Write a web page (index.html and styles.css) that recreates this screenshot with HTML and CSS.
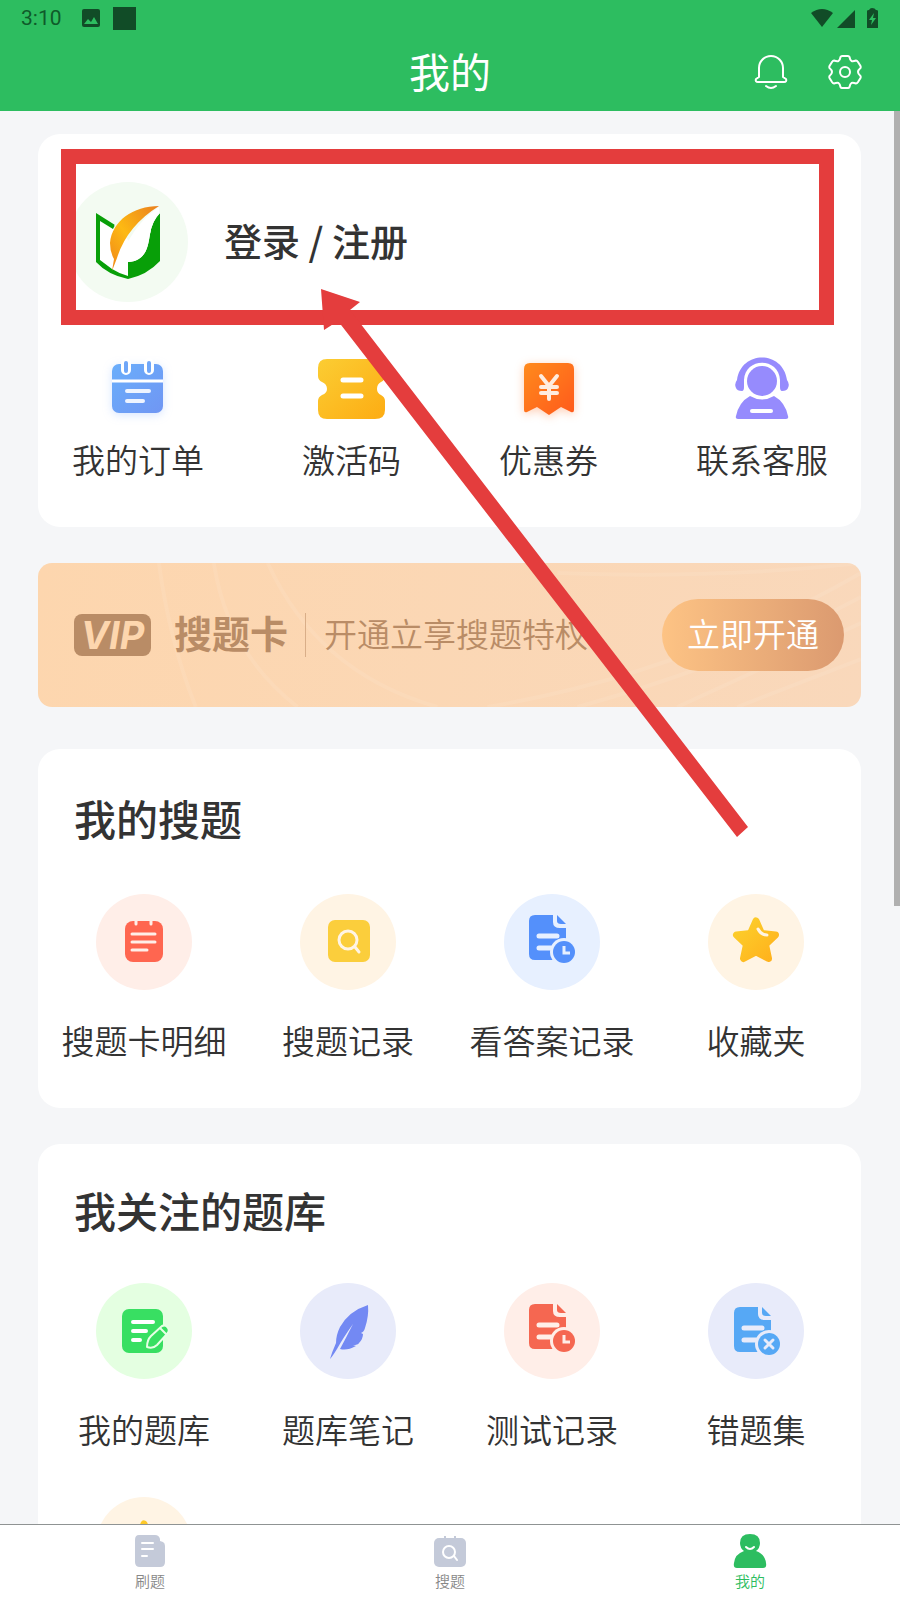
FILE: index.html
```html
<!DOCTYPE html>
<html lang="zh-CN">
<head>
<meta charset="utf-8">
<meta name="viewport" content="width=device-width, initial-scale=1">
<title>我的</title>
<link rel="stylesheet" href="styles.css">
</head>
<body>
<svg class="defs" width="0" height="0" aria-hidden="true">
  <defs>
    <linearGradient id="blue" x1="0" y1="0" x2="1" y2="1"><stop offset="0" stop-color="#6aaefb"/><stop offset="1" stop-color="#7096f3"/></linearGradient>
    <linearGradient id="gold" x1="0" y1="0" x2="1" y2="1"><stop offset="0" stop-color="#fbcd33"/><stop offset="1" stop-color="#fdac13"/></linearGradient>
    <linearGradient id="orange" x1="0" y1="0" x2="1" y2="1"><stop offset="0" stop-color="#ff8a1c"/><stop offset="1" stop-color="#ff5a1c"/></linearGradient>
    <linearGradient id="star" x1="0" y1="0" x2="1" y2="1"><stop offset="0" stop-color="#fcd02c"/><stop offset="1" stop-color="#ffb11c"/></linearGradient>
    <linearGradient id="plume" x1="0" y1="1" x2="1" y2="0"><stop offset="0" stop-color="#f08519"/><stop offset=".45" stop-color="#fdb913"/><stop offset="1" stop-color="#ea7f1e"/></linearGradient>
    <symbol id="doc" viewBox="0 0 96 96">
      <path fill="currentColor" d="M31 21H49V28Q49 34 56 34H62V66H31Q25 66 25 60V27Q25 21 31 21Z"/>
      <path fill="currentColor" d="M53 21L62 30H57Q53 30 53 27Z"/>
      <path class="cut" d="M35 42H53M35 54H47" stroke-width="5" stroke-linecap="round"/>
      <circle class="disc" cx="60" cy="58" r="14"/>
      <circle fill="currentColor" cx="60" cy="58" r="11"/>
    </symbol>
    <symbol id="favorite" viewBox="0 0 96 96">
      <path fill="url(#star)" stroke="url(#star)" stroke-width="7" stroke-linejoin="round" d="M48 27L53.500 39.500L67.500 41L57.500 50.500L60.500 64.500L48 58L35.500 64.500L38.500 50.500L28.500 41L42.500 39.500Z"/>
      <path fill="none" stroke="#fff4e4" stroke-width="3" stroke-linecap="round" d="M50 35Q53 41 59 41"/>
    </symbol>
  </defs>
</svg>
<div class="app">
  <header class="header">
    <div class="status">
      <div class="status-group">
        <span class="time">3:10</span>
        <svg class="status-photo" width="18" height="18" viewBox="0 0 18 18"><rect width="18" height="18" rx="2" fill="#114c27"/><path d="M2 15L6 10L9 13L12 8L16 15Z" fill="#2dbd60"/></svg>
        <span class="status-square"></span>
      </div>
      <svg class="status-system" width="68" height="20" viewBox="0 0 68 20" fill="#114c27"><path d="M0 5Q11-3 22 5L11 19Z"/><path d="M26 20L44 2V20Z"/><path d="M56 3Q56 2 58 2Q59 0 61 0Q64 0 65 2Q67 2 67 3V20H56Z"/><path d="M63 5L58 12H61L60 17L65 10H62Z" fill="#2dbd60"/></svg>
    </div>
    <div class="titlebar">
      <h1 class="title">我的</h1>
      <div class="actions">
        <button class="icon-button" aria-label="消息"><svg width="36" height="36" viewBox="0 0 36 36" fill="none" stroke="#fff" stroke-width="2" stroke-linecap="round" stroke-linejoin="round"><path d="M6 23V14A12 12 0 0 1 30 14V23L33 25Q34 28 31 28H5Q2 28 3 25Z"/><path d="M13 32Q18 36 23 32"/></svg></button>
        <button class="icon-button" aria-label="设置"><svg width="36" height="36" viewBox="0 0 36 36" fill="none" stroke="#fff" stroke-width="2" stroke-linejoin="round"><path d="M15 2H21Q22 2 22.500 3Q23 6 24.500 7Q26 7.500 29 6.500Q30 6.500 31 8L33.500 12Q34 13 33.500 14Q31 16 31 18Q31 20 33.500 22Q34 23 33.500 24L31 28Q30 29.500 29 29.500Q26 28.500 24.500 29Q23 30 22.500 33Q22 34 21 34H15Q14 34 13.500 33Q13 30 11.500 29Q10 28.500 7 29.500Q6 29.500 5 28L2.500 24Q2 23 2.500 22Q5 20 5 18Q5 16 2.500 14Q2 13 2.500 12L5 8Q6 6.500 7 6.500Q10 7.500 11.500 7Q13 6 13.500 3Q14 2 15 2Z"/><circle cx="18" cy="18" r="5"/></svg></button>
      </div>
    </div>
  </header>

  <main class="content">
    <section class="card account">
      <a class="login" href="#">
        <svg class="avatar" width="120" height="120" viewBox="0 0 120 120">
          <circle cx="60" cy="60" r="60" fill="#f3fbf2"/>
          <path fill="#fff" d="M30 36L48 47L90 28L90 78Q78 88 60 94Q42 89 30 79Z"/>
          <path fill="#089f08" d="M28 31L47 43L45 47L32 39V78L44 87Q52 92 60 94V80C78 79 80 65 82 52Q84 39 92 31V79Q79 93 60 97Q40 93 28 80Z"/>
          <path fill="#f3fbf2" d="M46 43L91 24L92 31Q84 39 82 52L62 60Z"/>
          <path fill="#fff" d="M91 25Q68 40 55 70L47 87L60 92V80C78 79 80 65 82 52Q84 39 91 31Z"/>
          <path fill="url(#plume)" d="M91 24C65 24 44 39 42 61Q42 70 46 77L44 89L49 76Q59 44 91 24Z"/>
        </svg>
        <span class="login-text">登录 / 注册</span>
      </a>
      <nav class="shortcuts">
        <a class="shortcut" href="#">
          <svg width="76" height="76" viewBox="0 0 76 76"><g class="blue-glow"><rect x="12" y="14" width="51" height="49" rx="7" fill="url(#blue)"/></g><path stroke="#fff" stroke-width="3" d="M12 31H63"/><path stroke="#fff" stroke-width="10" stroke-linecap="round" d="M26 13V20M49 13V20"/><path stroke="#6fa6f8" stroke-width="4" stroke-linecap="round" d="M26 13V21M49 13V21"/><path stroke="#eef4ff" stroke-width="4" stroke-linecap="round" d="M27 41H49M27 51H43"/></svg>
          <span>我的订单</span>
        </a>
        <a class="shortcut" href="#">
          <svg width="76" height="76" viewBox="0 0 76 76"><path fill="url(#gold)" d="M13 9H61Q71 9 71 18V26Q71 30 67 32Q63 34 63 39Q63 43 67 45Q71 47 71 51V60Q71 69 61 69H13Q4 69 4 60V51Q4 47 8 45Q13 43 13 39Q13 34 8 32Q4 30 4 26V18Q4 9 13 9Z"/><path stroke="#fff" stroke-width="5" stroke-linecap="round" d="M29 30H47M29 46H47"/></svg>
          <span>激活码</span>
        </a>
        <a class="shortcut" href="#">
          <svg width="76" height="76" viewBox="0 0 76 76"><path class="orange-glow" fill="url(#orange)" d="M19 13H57Q63 13 63 19V60Q63 63 60 62L50 57L38 65L26 57L16 62Q13 63 13 60V19Q13 13 19 13Z"/><path fill="none" stroke="#ffecdf" stroke-width="4" stroke-linecap="round" d="M30 26L38 36L46 26M38 36V49M30 37H46M30 43H46"/></svg>
          <span>优惠券</span>
        </a>
        <a class="shortcut" href="#">
          <svg width="76" height="76" viewBox="0 0 76 76" fill="#968bfd"><circle cx="38" cy="31" r="15"/><path d="M13 30C17 0 59 0 63 30Q66 34 64 38Q63 41 58 41Q56 41 56 37V30C55 7 21 7 20 30V37Q20 41 18 41Q13 41 12 38Q10 34 13 30Z"/><path d="M26 46Q38 53 50 46Q61 52 64 66Q65 69 62 69H14Q11 69 12 66Q15 52 26 46Z"/><path stroke="#fff" stroke-width="4" stroke-linecap="round" d="M28 61H47"/></svg>
          <span>联系客服</span>
        </a>
      </nav>
      <div class="highlight"></div>
    </section>

    <section class="vip">
      <svg class="vip-rays" viewBox="0 0 824 144" preserveAspectRatio="none" fill="none" stroke="#fff" stroke-opacity=".08" stroke-width="4"><path d="M121 0Q132 80 158 144M176 0Q190 90 260 144M230 0Q280 110 400 144M450 144Q650 110 824 10M540 144Q700 100 824 34M640 144L824 60M520 10Q680 16 824 0M700 144L824 96"/></svg>
      <span class="vip-badge">VIP</span>
      <strong class="vip-name">搜题卡</strong>
      <span class="vip-desc">开通立享搜题特权</span>
      <button class="vip-button">立即开通</button>
    </section>

    <section class="card search-card">
      <h2 class="card-title">我的搜题</h2>
      <div class="grid">
        <a class="entry" href="#"><svg class="bubble rose" viewBox="0 0 96 96"><rect x="29" y="27" width="38" height="41" rx="8" fill="#ff6650"/><path class="cut" stroke-width="3" stroke-linecap="round" d="M40 26V30M55 26V30"/><path class="cut" stroke-width="3" stroke-linecap="round" d="M36 40H59M36 48H59M36 56H51"/></svg><span>搜题卡明细</span></a>
        <a class="entry" href="#"><svg class="bubble cream" viewBox="0 0 96 96"><rect x="28" y="26" width="42" height="42" rx="7" fill="#fbce3c"/><circle class="cut" stroke-width="3" cx="48" cy="46" r="9"/><path class="cut" stroke-width="3" stroke-linecap="round" d="M55 53L59 58"/></svg><span>搜题记录</span></a>
        <a class="entry" href="#"><svg class="bubble sky" viewBox="0 0 96 96"><use href="#doc"/><path class="cut" stroke-width="3" d="M60 52V59H66"/></svg><span>看答案记录</span></a>
        <a class="entry" href="#"><svg class="bubble cream" viewBox="0 0 96 96"><use href="#favorite"/></svg><span>收藏夹</span></a>
      </div>
    </section>

    <section class="card bank-card">
      <h2 class="card-title">我关注的题库</h2>
      <div class="grid">
        <a class="entry" href="#"><svg class="bubble mint" viewBox="0 0 96 96"><rect x="26" y="26" width="41" height="44" rx="7" fill="#38df62"/><path stroke="#fff" stroke-width="4" stroke-linecap="round" d="M37 39H57M37 48H50M37 57H44"/><path fill="#38df62" stroke="#e7ffe5" stroke-width="2" stroke-linejoin="round" d="M51 64Q51 57 55 53L66 43Q70 41 72 45Q74 48 71 51L61 62Q57 66 51 64ZM64 45L70 51"/></svg><span>我的题库</span></a>
        <a class="entry" href="#"><svg class="bubble lilac" viewBox="0 0 96 96"><path fill="#7389f3" d="M68 22Q49 28 40 44Q36 52 36 60Q32 69 30 76Q32 74 37 66Q43 55 53 41Q46 55 40 66Q47 68 56 63L53 62Q58 62 59 60Q63 56 63 51L61 50Q64 49 65 45Q69 33 68 22Z"/></svg><span>题库笔记</span></a>
        <a class="entry" href="#"><svg class="bubble rose" viewBox="0 0 96 96"><use href="#doc"/><path class="cut" stroke-width="3" d="M60 52V59H66"/></svg><span>测试记录</span></a>
        <a class="entry" href="#"><svg class="bubble lilac" viewBox="-1 -3 96 96"><use href="#doc" width="96" height="96"/><path class="cut" stroke-width="3" stroke-linecap="round" d="M56 54L64 62M64 54L56 62"/></svg><span>错题集</span></a>
        <a class="entry" href="#" aria-label="收藏"><svg class="bubble cream" viewBox="0 0 96 96"><use href="#favorite"/></svg></a>
      </div>
    </section>

    <svg class="arrow" width="900" height="760" viewBox="0 111 900 760" aria-hidden="true"><path fill="#e43d3d" d="M321 289L360 302L350 310L748 827L737 837L338 321L324 330Z"/></svg>
    <div class="scroll-thumb"></div>
  </main>

  <nav class="tabs">
    <a class="tab" href="#"><svg width="34" height="34" viewBox="0 0 34 34"><path fill="#c4cad9" d="M6 1H22Q26 1 27 5V7L30 8Q32 9 32 12V28Q32 33 27 33H7Q2 33 2 28V6Q2 1 6 1Z"/><path stroke="#fff" stroke-width="2" stroke-linecap="round" d="M9 9H20M9 15H20M9 22H14"/></svg><span>刷题</span></a>
    <a class="tab" href="#"><svg width="34" height="34" viewBox="0 0 34 34" fill="none"><rect x="1" y="4" width="32" height="29" rx="5" fill="#c4cad9"/><path stroke="#c4cad9" stroke-width="2" d="M12 2V6M22 2V6"/><circle cx="16" cy="18" r="6" stroke="#fff" stroke-width="2"/><path stroke="#fff" stroke-width="2" stroke-linecap="round" d="M21 22L24 26"/></svg><span>搜题</span></a>
    <a class="tab active" href="#"><svg width="34" height="34" viewBox="0 0 34 34" fill="#2dbd60"><path d="M17 0Q27 0 27 9Q27 14 23 17Q32 20 33 29Q34 34 30 34H4Q0 34 1 29Q2 20 11 17Q7 14 7 9Q7 0 17 0Z"/><path fill="none" stroke="#fff" stroke-width="2" stroke-linecap="round" d="M13 13Q17 17 21 13"/></svg><span>我的</span></a>
  </nav>
</div>
</body>
</html>
```
FILE: styles.css
```css
* { box-sizing: border-box; }
body {
  margin: 0;
  background: #f5f6f8;
  color: #333;
  font-family: "Noto Sans CJK SC", sans-serif;
  font-weight: 350;
}
a { color: inherit; text-decoration: none; }
button { border: 0; padding: 0; background: none; font: inherit; cursor: pointer; }
h1, h2 { margin: 0; }
svg { display: block; }
.defs { position: absolute; }

.app { display: flex; flex-direction: column; height: 100vh; }

.header { flex: none; background: #2dbd60; }
.status {
  display: flex;
  align-items: center;
  justify-content: space-between;
  height: 36px;
  padding: 0 21px;
}
.status-group { display: flex; align-items: center; }
.time { font: 400 21px/36px Roboto, sans-serif; color: #0f5a2a; }
.status-photo { margin: 0 13px 0 20px; }
.status-square { width: 23px; height: 23px; background: #114c27; }
.titlebar {
  display: grid;
  grid-template-columns: 1fr auto 1fr;
  align-items: center;
  height: 75px;
  padding: 0 37px 3px;
}
.title { grid-column: 2; padding-bottom: 4px; color: #fff; font-size: 41px; font-weight: 400; line-height: 64px; }
.actions { display: flex; justify-content: flex-end; gap: 38px; }
.icon-button { width: 36px; height: 36px; }

.content { position: relative; flex: 1; min-height: 0; overflow: hidden; padding: 23px 39px 0 38px; }
.card { background: #fff; border-radius: 22px; }

.account { position: relative; height: 393px; padding: 48px 33px 0 34px; }
.login { display: flex; align-items: center; gap: 36px; margin-left: -4px; }
.login-text { padding-bottom: 4px; font-size: 38px; font-weight: 500; line-height: 48px; }
.shortcuts { display: flex; justify-content: space-between; margin-top: 48px; }
.shortcut { display: flex; flex-direction: column; align-items: center; gap: 9px; font-size: 33px; line-height: 48px; }
.blue-glow { filter: drop-shadow(0 2px 5px #6a9cff44); }
.orange-glow { filter: drop-shadow(0 2px 5px #ff6a1c55); }
.highlight {
  position: absolute;
  inset: 15px 27px auto 23px;
  height: 176px;
  border: 15px solid #e43d3d;
  pointer-events: none;
}

.vip {
  position: relative;
  display: flex;
  align-items: center;
  height: 144px;
  margin-top: 36px;
  padding: 0 17px 0 36px;
  border-radius: 14px;
  overflow: hidden;
  background: linear-gradient(100deg, #fdd6ae, #f9d8bb);
  color: #b98c66;
}
.vip > * { position: relative; }
.vip > .vip-rays { position: absolute; inset: 0; width: 100%; height: 100%; }
.vip-badge {
  width: 77px;
  height: 42px;
  border-radius: 8px;
  background: #b98c66;
  color: #fdd6ae;
  font: italic 700 38px/42px Inter, sans-serif;
  text-align: center;
}
.vip-name { margin-left: 23px; padding-bottom: 6px; font-size: 38px; line-height: 44px; font-weight: 700; }
.vip-desc { margin-left: 17px; padding: 0 0 4px 18px; border-left: 1px solid #d9ae88; font-size: 33px; line-height: 40px; }
.vip-button {
  width: 182px;
  height: 72px;
  margin-left: auto;
  padding-bottom: 4px;
  border-radius: 36px;
  background: linear-gradient(90deg, #fdc384, #db9a70);
  color: #fff;
  font-size: 33px;
}

.search-card { margin-top: 42px; padding: 39px 3px 44px 4px; }
.bank-card { margin-top: 36px; padding: 36px 3px 44px 4px; }
.card-title { padding-left: 32px; font-size: 42px; font-weight: 500; line-height: 60px; }
.grid { display: grid; grid-template-columns: repeat(4, 1fr); row-gap: 44px; margin-top: 46px; }
.bank-card .grid { margin-top: 43px; }
.entry { display: flex; flex-direction: column; align-items: center; gap: 26px; font-size: 33px; line-height: 48px; }
.bubble { width: 96px; height: 96px; border-radius: 50%; background: var(--tint); }
.cut { fill: none; stroke: var(--tint); }
.disc { fill: var(--tint); }
.rose { --tint: #ffeee8; color: #f56751; }
.cream { --tint: #fff4e4; }
.sky { --tint: #e7f0ff; color: #5490fb; }
.mint { --tint: #e4ffe1; }
.lilac { --tint: #e8ebfa; color: #56a8f5; }

.arrow { position: absolute; top: 0; left: 0; pointer-events: none; }
.scroll-thumb { position: absolute; top: 0; right: 0; width: 6px; height: 795px; background: #b0b0b0; }

.tabs { flex: none; display: flex; height: 76px; border-top: 1px solid #8f9393; background: #fff; }
.tab { flex: 1; display: flex; flex-direction: column; align-items: center; padding-top: 9px; gap: 2px; color: #888; font-size: 15px; line-height: 22px; }
.active { color: #2dbd60; }
```
